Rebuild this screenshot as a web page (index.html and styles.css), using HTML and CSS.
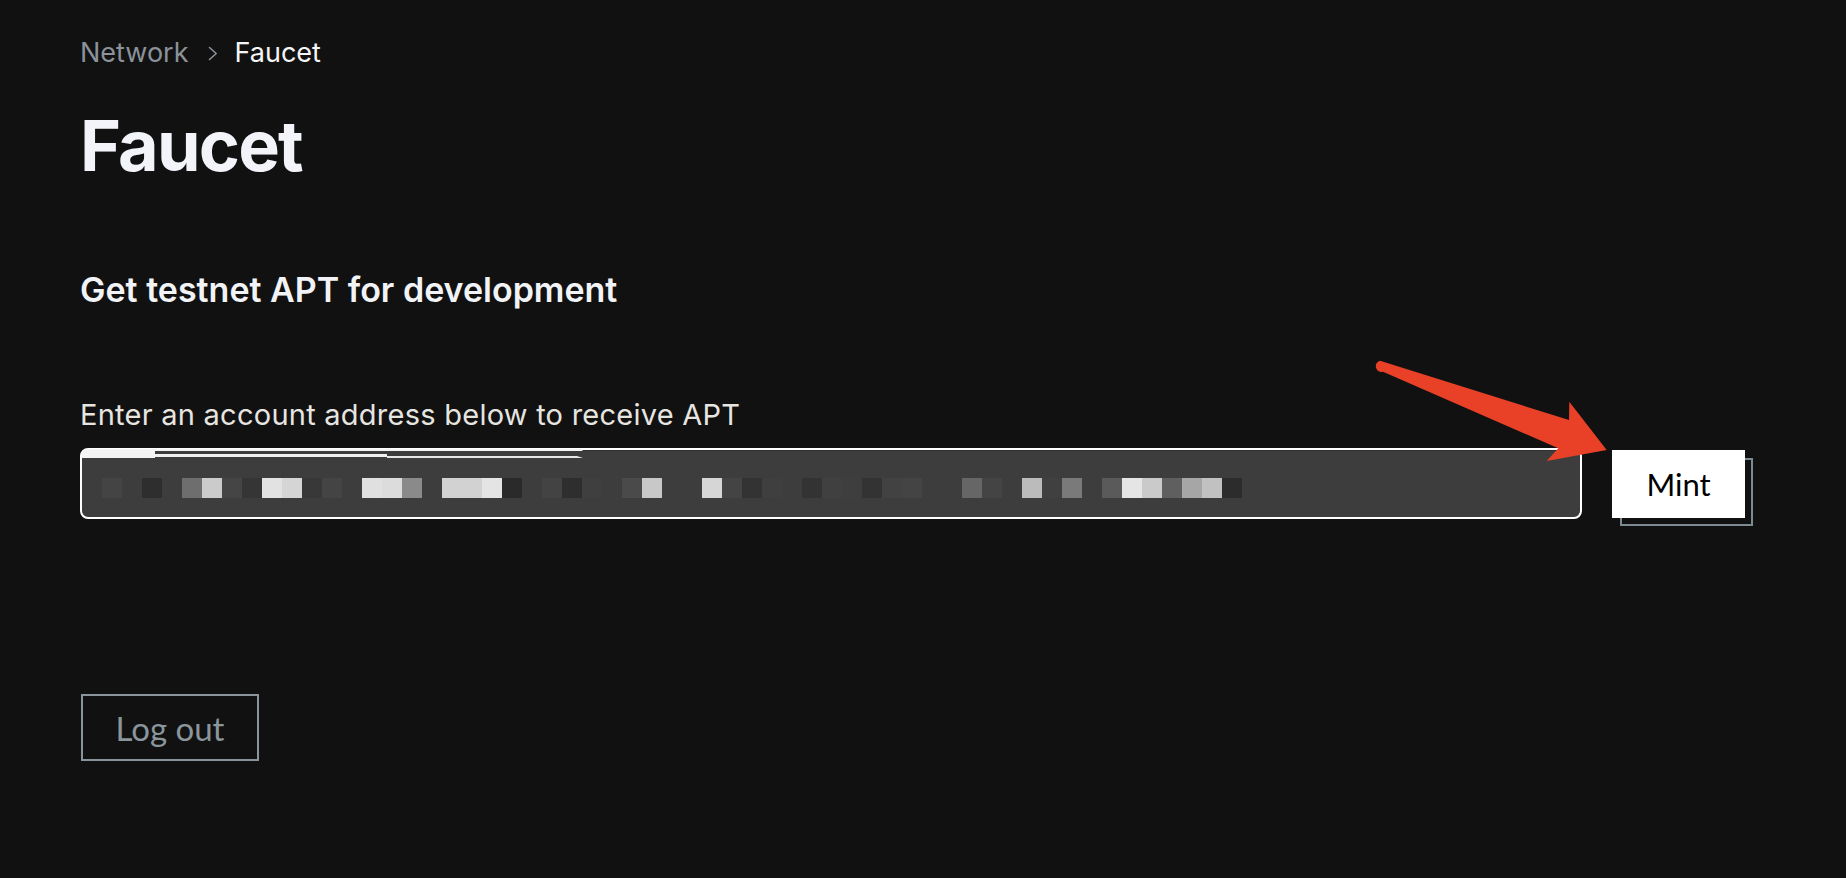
FILE: index.html
```html
<!DOCTYPE html>
<html lang="en">
<head>
<meta charset="utf-8">
<title>Faucet</title>
<link rel="stylesheet" href="styles.css">
</head>
<body>
<main class="page">
  <nav class="crumbs">
    <span class="crumb-link">Network</span>
    <svg class="crumb-sep" width="10" height="15" viewBox="0 0 10 15"><polyline points="1.5,1.5 8.2,7.5 1.5,13.5"/></svg>
    <span class="crumb-current">Faucet</span>
  </nav>
  <h1 class="title">Faucet</h1>
  <h2 class="subtitle">Get testnet APT for development</h2>
  <label class="field-label">Enter an account address below to receive APT</label>
  <div class="mint-row">
    <div class="address-field" role="textbox" aria-label="Account address">
      <svg class="artifact" width="520" height="12" viewBox="0 0 520 12">
        <path d="M0,9 Q0,1 7,0 L500,0 L502,2 L74,2 L74,9 Z" fill="#f4f4f4"/>
        <rect x="74" y="5" width="232" height="3" fill="#f0f0f0"/>
        <path d="M306,7 L496,7 L502,9 L306,9 Z" fill="#e6e6e6"/>
      </svg>
      <div class="pixels">
        <span class="px" style="background:#444444"></span>
        <span class="px"></span>
        <span class="px" style="background:#2e2e2e"></span>
        <span class="px"></span>
        <span class="px" style="background:#6e6e6e"></span>
        <span class="px" style="background:#cbcbcb"></span>
        <span class="px" style="background:#454545"></span>
        <span class="px" style="background:#353535"></span>
        <span class="px" style="background:#e2e2e2"></span>
        <span class="px" style="background:#d5d5d5"></span>
        <span class="px" style="background:#383838"></span>
        <span class="px" style="background:#444444"></span>
        <span class="px"></span>
        <span class="px" style="background:#e0e0e0"></span>
        <span class="px" style="background:#dcdcdc"></span>
        <span class="px" style="background:#8a8a8a"></span>
        <span class="px"></span>
        <span class="px" style="background:#d2d2d2"></span>
        <span class="px" style="background:#d2d2d2"></span>
        <span class="px" style="background:#e4e4e4"></span>
        <span class="px" style="background:#2a2a2a"></span>
        <span class="px"></span>
        <span class="px" style="background:#434343"></span>
        <span class="px" style="background:#2e2e2e"></span>
        <span class="px" style="background:#3f3f3f"></span>
        <span class="px"></span>
        <span class="px" style="background:#4a4a4a"></span>
        <span class="px" style="background:#c8c8c8"></span>
        <span class="px"></span>
        <span class="px"></span>
        <span class="px" style="background:#d6d6d6"></span>
        <span class="px" style="background:#444444"></span>
        <span class="px" style="background:#333333"></span>
        <span class="px" style="background:#3f3f3f"></span>
        <span class="px"></span>
        <span class="px" style="background:#333333"></span>
        <span class="px" style="background:#404040"></span>
        <span class="px" style="background:#3e3e3e"></span>
        <span class="px" style="background:#333333"></span>
        <span class="px" style="background:#424242"></span>
        <span class="px" style="background:#444444"></span>
        <span class="px"></span>
        <span class="px"></span>
        <span class="px" style="background:#666666"></span>
        <span class="px" style="background:#444444"></span>
        <span class="px"></span>
        <span class="px" style="background:#bbbbbb"></span>
        <span class="px" style="background:#404040"></span>
        <span class="px" style="background:#7a7a7a"></span>
        <span class="px"></span>
        <span class="px" style="background:#5a5a5a"></span>
        <span class="px" style="background:#e5e5e5"></span>
        <span class="px" style="background:#cacaca"></span>
        <span class="px" style="background:#5f5f5f"></span>
        <span class="px" style="background:#a6a6a6"></span>
        <span class="px" style="background:#c1c1c1"></span>
        <span class="px" style="background:#2c2c2c"></span>
      </div>
    </div>
    <button class="mint-btn" type="button">Mint</button>
    <svg class="arrow" width="245" height="115" viewBox="0 0 245 115">
      <path d="M10,5.7 L199,65 L199.3,46.7 L236.7,95 L176.7,106 L188.3,93.3 L13,16.7 A5.6,5.6 0 0 1 10,5.7 Z" fill="#e94128"/>
    </svg>
  </div>
  <button class="logout-btn" type="button">Log out</button>
</main>
</body>
</html>
```

FILE: styles.css
```css
*, *::before, *::after { box-sizing: border-box; }

html {
  background: #111111;
}

body {
  margin: 0;
  font-family: Inter, "Noto Sans", "Liberation Sans", sans-serif;
  color: #f2f4f8;
}

.page {
  display: flex;
  flex-direction: column;
  align-items: flex-start;
  padding: 37px 101px 0 80px;
  min-height: 878px;
}

.crumbs {
  display: flex;
  align-items: center;
  height: 32px;
  font-size: 27px;
  line-height: 32px;
}

.crumb-link { color: #8b929b; }

.crumb-sep {
  margin: 1px 17px 0 19px;
  fill: none;
  stroke: #8b929b;
  stroke-width: 1.6;
  stroke-linecap: round;
  stroke-linejoin: round;
}

.crumb-current { color: #f4f5f7; }

.title {
  margin: 42px 0 0;
  font-size: 70px;
  line-height: 70px;
  font-weight: 700;
  letter-spacing: -1.8px;
  color: #f2f4f9;
}

.subtitle {
  margin: 89px 0 0;
  font-size: 34px;
  line-height: 40px;
  font-weight: 600;
  color: #f1f3f6;
}

.field-label {
  display: block;
  margin-top: 87px;
  font-size: 29px;
  line-height: 36px;
  letter-spacing: 0.25px;
  color: #e7e5e0;
}

.mint-row {
  position: relative;
  isolation: isolate;
  align-self: stretch;
  display: flex;
  align-items: center;
  gap: 30px;
  margin-top: 15px;
}

.address-field {
  position: relative;
  flex: 1;
  height: 71px;
  border: 2px solid #ffffff;
  border-radius: 8px;
  background: #3d3d3d;
  box-shadow: inset 0 1px 0 #2f2f2f;
  padding: 28px 0 0 20px;
}

.artifact {
  position: absolute;
  left: -1px;
  top: -1px;
}

.pixels {
  display: flex;
}

.px {
  width: 20px;
  height: 20px;
  background: #3d3d3d;
}

.mint-btn {
  position: relative;
  width: 133px;
  height: 68px;
  padding: 0;
  border: none;
  background: #ffffff;
  color: #000000;
  font-family: Lato, "Open Sans", sans-serif;
  font-size: 31px;
  display: flex;
  align-items: center;
  justify-content: center;
}

.mint-btn::after {
  content: "";
  position: absolute;
  top: 8px;
  left: 8px;
  width: 100%;
  height: 100%;
  border: 2px solid #7d8a91;
  z-index: -1;
}

.arrow {
  position: absolute;
  left: 1290px;
  top: -93px;
  z-index: 2;
}

.logout-btn {
  margin-top: 175px;
  margin-left: 1px;
  width: 178px;
  height: 67px;
  padding: 0;
  border: 2px solid #8a959b;
  background: transparent;
  color: #8a969c;
  font-family: Lato, "Open Sans", sans-serif;
  font-size: 33px;
  display: flex;
  align-items: center;
  justify-content: center;
}
```
